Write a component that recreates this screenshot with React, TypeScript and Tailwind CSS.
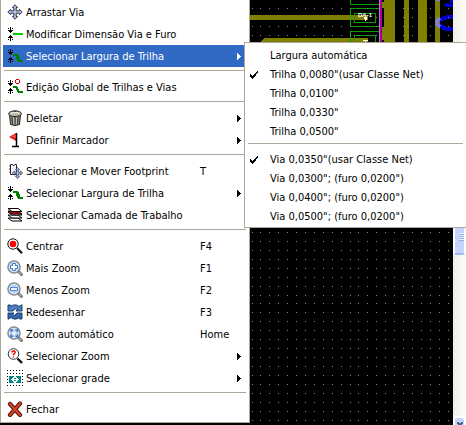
import React from "react";

type IconProps = { children: React.ReactNode; crisp?: boolean };

function Icon({ children, crisp = true }: IconProps) {
  return (
    <svg
      className="size-4 shrink-0"
      viewBox="0 0 16 16"
      shapeRendering={crisp ? "crispEdges" : "auto"}
      fill="none"
      aria-hidden="true"
    >
      {children}
    </svg>
  );
}

const Gap = () => (
  <path
    fill="#000"
    d="M3 1h1v6h-1zM1 2h1v1h-1zM5 2h1v1h-1zM1 4h5v1h-5zM2 5h3v1h-3zM3 9h1v6h-1zM2 10h3v1h-3zM1 11h5v1h-5zM1 13h1v1h-1zM5 13h1v1h-1z"
  />
);

const Track = () => (
  <path fill="#008000" d="M6 6h5v1h1v2h1v3h3v2h-5v-1h-1v-2h-1v-3h-3z" />
);

const MoveIcon = () => (
  <Icon crisp={false}>
    <path
      d="M8 .8 10.600 3.600H9.200V6.800h3.200V5.400L15.200 8l-2.800 2.600V9.200H9.200v3.200h1.400L8 15.200 5.400 12.400h1.400V9.200H3.600v1.400L.8 8l2.800-2.600v1.400h3.200V3.600H5.400z"
      fill="#b9c4e2"
      stroke="#33364a"
      strokeWidth="1"
    />
  </Icon>
);
const ViaSizeIcon = () => (
  <Icon>
    <Gap />
    <path fill="#00d000" d="M6 7h10v2H6z" />
  </Icon>
);
const TrackWidthIcon = () => (
  <Icon>
    <Gap />
    <Track />
  </Icon>
);
const GlobalEditIcon = () => (
  <Icon>
    <Gap />
    <path fill="#008000" d="M6 7h4v1h1v2h1v2h4v2h-5v-1h-1v-2h-1v-2h-3z" />
    <path fill="#f00000" d="M9 0h3v1h-3zM8 1h1v3h-1zM12 1h1v3h-1zM9 4h3v1h-3z" />
  </Icon>
);
const TrashIcon = () => (
  <Icon crisp={false}>
    <path d="M2.500 5h11l-1 9.500Q8 16.500 3.500 14.500z" fill="#8b8b80" stroke="#25251f" />
    <path d="M5 7l.5 7M8 7v7.500M11 7l-.5 7" stroke="#383830" />
    <path d="M6.500 7l.3 7M9.500 7v7" stroke="#d8d8cc" strokeWidth=".7" />
    <ellipse cx="8" cy="3.700" rx="6.500" ry="2.800" fill="#bdbdae" stroke="#25251f" />
    <path d="M4 3.200q4-2 8 0" stroke="#f4f4e8" />
    <path d="M6.500 1.200h3" stroke="#25251f" />
  </Icon>
);
const FlagIcon = () => (
  <Icon crisp={false}>
    <path d="M2 5 9 1v8z" fill="#f01818" />
    <path d="M4.500 5 9 2.500v3z" fill="#ff7060" />
    <path d="M9.500 1v13M5 14.500h7" stroke="#000" strokeWidth="1.500" />
  </Icon>
);
const MoveFootprintIcon = () => (
  <Icon crisp={false}>
    <path d="M3.500 1.500h2l.5 1h1l.5-1h2v10h-6z" fill="#f4f4fa" stroke="#222238" />
    <path d="M2 3h1M2 6h1M2 9h1" stroke="#d02020" />
    <path
      d="M10.500 4.500l2 2.200h-1.200v2.500h2.300V8L15.700 10l-2.100 2v-1.200h-2.300v2.500h1.200l-2 2.200-2-2.200h1.200v-2.500H7.400V12L5.300 10l2.100-2v1.200h2.300V6.700H8.500z"
      fill="#c0cbe8"
      stroke="#34395a"
      strokeWidth=".8"
    />
  </Icon>
);
const LayersIcon = () => (
  <Icon crisp={false}>
    {[11, 8, 5].map((y) => (
      <path key={y} d={`M1 ${y}h10l4 3H5z`} fill="#fff" stroke="#000" />
    ))}
    <path d="M1 4h10l4 3H5z" fill="#b00c0c" stroke="#300" />
    <path d="M1 1.500h10l4 3H5z" fill="#fff" stroke="#000" />
  </Icon>
);
const CenterIcon = () => (
  <Icon crisp={false}>
    <path d="M10 10l5 5.300" stroke="#111" strokeWidth="2" />
    <circle cx="6" cy="6" r="5.200" fill="#fff" stroke="#111" strokeWidth="1" />
    <circle cx="6" cy="6" r="3.300" fill="#f00" />
  </Icon>
);
const Lens = ({ children }: { children: React.ReactNode }) => (
  <Icon crisp={false}>
    <path d="M11.500 11.500l3 3" stroke="#777" strokeWidth="3" strokeLinecap="round" />
    <path d="M12 12l2.300 2.300" stroke="#c4c4c4" strokeWidth="1" />
    <circle cx="7" cy="7" r="6" fill="#b9d3f3" stroke="#85898c" strokeWidth="1.600" />
    <circle cx="7" cy="7" r="4.800" stroke="#e4effb" strokeWidth=".8" />
    {children}
  </Icon>
);
const ZoomInIcon = () => (
  <Lens>
    <path d="M7 3v8M3 7h8" stroke="#3d77c4" strokeWidth="3.400" />
    <path d="M7 4v6M4 7h6" stroke="#fff" strokeWidth="1.800" />
  </Lens>
);
const ZoomOutIcon = () => (
  <Lens>
    <path d="M3 7h8" stroke="#3d77c4" strokeWidth="3.600" />
    <path d="M4 7h6" stroke="#fff" strokeWidth="1.800" />
  </Lens>
);
const ZoomFitIcon = () => (
  <Lens>
    <path
      d="M4 6V4h2M8.500 4h2v2M10.500 8.500v2h-2M6 10.500H4v-2"
      stroke="#3d77c4"
      strokeWidth="1.500"
    />
    <circle cx="7.200" cy="7.200" r="1.300" fill="#fff" />
  </Lens>
);
const RefreshIcon = () => (
  <Icon crisp={false}>
    <path
      d="M1 1h2.500v1.500Q8-.8 12 2.500L15 .8V7H9l2-1.800Q8 3.500 6 7H1z"
      fill="#4d7fc0"
      stroke="#1c3f74"
    />
    <path
      d="M15 15h-2.500v-1.500Q8 16.800 4 13.500L1 15.200V9h6l-2 1.800Q8 12.500 10 9h5z"
      fill="#3465a4"
      stroke="#1c3f74"
    />
  </Icon>
);
const SelectZoomIcon = () => (
  <Icon crisp={false}>
    <path d="M10.500 10.500l4.500 4.500" stroke="#111" strokeWidth="2.400" />
    <circle cx="6.500" cy="6" r="5.300" fill="#fff" stroke="#333" strokeWidth="1" />
    <path d="M4.800 4.500q0-1.500 1.700-1.500t1.700 1.400q0 1-1.700 1.900v1M6.500 8.200v1.300" stroke="#e00" strokeWidth="1.400" />
  </Icon>
);
const gridSteps = [0, 3, 6, 9, 12, 15];
const GridIcon = () => (
  <Icon>
    {gridSteps.flatMap((y) =>
      gridSteps.map((x) => (
        <rect key={`${x}-${y}`} x={x} y={y} width="1" height="1" fill="#000" />
      )),
    )}
    <path fill="#008484" d="M2 6h12v7H2z" />
    <path fill="#fff" d="M4 9h8v1H4zM5 8h1v3H5zM10 8h1v3h-1zM6 7h1v5H6zM9 7h1v5H9zM7 6h2v2H7zM7 11h2v2H7z" />
    <path fill="#008484" d="M7 8h2v1H7zM7 10h2v1H7z" />
  </Icon>
);
const CloseIcon = () => (
  <Icon crisp={false}>
    <path d="M3 3l10 11M13 2.500L3 14" stroke="#4a150a" strokeWidth="4.200" strokeLinecap="round" />
    <path d="M3 3l10 11M13 2.500L3 14" stroke="#cf4426" strokeWidth="2.600" strokeLinecap="round" />
  </Icon>
);

type Item = {
  label: string;
  icon: React.ReactNode;
  shortcut?: string;
  submenu?: boolean;
  active?: boolean;
};

const groups: Item[][] = [
  [
    { label: "Arrastar Via", icon: <MoveIcon /> },
    { label: "Modificar Dimensão Via e Furo", icon: <ViaSizeIcon /> },
    { label: "Selecionar Largura de Trilha", icon: <TrackWidthIcon />, submenu: true, active: true },
  ],
  [{ label: "Edição Global de Trilhas e Vias", icon: <GlobalEditIcon /> }],
  [
    { label: "Deletar", icon: <TrashIcon />, submenu: true },
    { label: "Definir Marcador", icon: <FlagIcon />, submenu: true },
  ],
  [
    { label: "Selecionar e Mover Footprint", icon: <MoveFootprintIcon />, shortcut: "T" },
    { label: "Selecionar Largura de Trilha", icon: <TrackWidthIcon />, submenu: true },
    { label: "Selecionar Camada de Trabalho", icon: <LayersIcon /> },
  ],
  [
    { label: "Centrar", icon: <CenterIcon />, shortcut: "F4" },
    { label: "Mais Zoom", icon: <ZoomInIcon />, shortcut: "F1" },
    { label: "Menos Zoom", icon: <ZoomOutIcon />, shortcut: "F2" },
    { label: "Redesenhar", icon: <RefreshIcon />, shortcut: "F3" },
    { label: "Zoom automático", icon: <ZoomFitIcon />, shortcut: "Home" },
    { label: "Selecionar Zoom", icon: <SelectZoomIcon />, submenu: true },
    { label: "Selecionar grade", icon: <GridIcon />, submenu: true },
  ],
  [{ label: "Fechar", icon: <CloseIcon /> }],
];

const widthGroups: { label: string; checked?: boolean }[][] = [
  [
    { label: "Largura automática" },
    { label: 'Trilha 0,0080"(usar Classe Net)', checked: true },
    { label: 'Trilha 0,0100"' },
    { label: 'Trilha 0,0330"' },
    { label: 'Trilha 0,0500"' },
  ],
  [
    { label: 'Via 0,0350"(usar Classe Net)', checked: true },
    { label: 'Via 0,0300"; (furo 0,0200")' },
    { label: 'Via 0,0400"; (furo 0,0200")' },
    { label: 'Via 0,0500"; (furo 0,0200")' },
  ],
];

function MenuRow({ item }: { item: Item }) {
  return (
    <button
      type="button"
      role="menuitem"
      aria-haspopup={item.submenu ? "menu" : undefined}
      className={`flex h-[22px] w-full items-center gap-[3px] pr-1.5 pl-1 text-left whitespace-nowrap ${
        item.active ? "bg-[#316ac5] text-white" : "text-black"
      }`}
    >
      {item.icon}
      <span className="flex-1 pt-0.5">{item.label}</span>
      <span className="flex w-[41px] shrink-0 items-center justify-between">
        <span className="pt-0.5">{item.shortcut}</span>
        {item.submenu && (
          <svg className="h-[7px] w-1" viewBox="0 0 4 7" fill="currentColor" shapeRendering="crispEdges" aria-hidden="true">
            <path d="M0 0h1v1h1v1h1v1h1v1h-1v1h-1v1h-1v1h-1z" />
          </svg>
        )}
      </span>
    </button>
  );
}

const range = (n: number) => Array.from({ length: n }, (_, i) => i);

function Board() {
  return (
    <svg className="absolute inset-0 size-full" shapeRendering="crispEdges" aria-hidden="true">
      <g fill="#808000">
        <path d="M240 15h128v5H240zM264 38h104v4H261v-1h1v-1h1v-1h1z" />
        <path d="M384 0h11v42h-11v-2h-2v-2h-1v-8h1v-3h2V8h-2V2h2zM404 0h5v42h-5zM418 0h9v42h-9zM435 0h5v42h-5z" />
      </g>
      <g stroke="#00a000" fill="none">
        <path d="M350.500-1v5.500h29V-1M350.500 8.500h29v18h-29zM350.500 42V31.500h29V42M354.500 13.500h21v9h-21zM354.500 42v-6.500h21V42" />
      </g>
      <path d="M379 0h3v42h-3z" fill="#a000a0" />
      <path d="M379 0h1v42h-1z" fill="#c878c8" />
      <g fill="none" strokeWidth="4">
        <path d="M453 17h-5q-6 1-8 4M440 24q3 5 8 5h5" stroke="#0000d0" />
        <path d="M440 18q-6 4.500 0 9" stroke="#8080d0" />
      </g>
      <path d="M446 3h3v1h4v3h-7v-1h-2v-2h2zM450 0h3v3h-3z" fill="#0000d0" />
      <path d="M435 0h5v1h-5z" fill="#8080d0" />
      <g fill="#858585">
        {range(60).flatMap((row) =>
          range(24).map((col) => (
            <rect
              key={`${row}-${col}`}
              x={Math.floor(252 + col * 8.91)}
              y={Math.floor(8.3 + row * 8.96)}
              width="1"
              height="1"
            />
          )),
        )}
      </g>
      <text x="358" y="17" fill="#fff" className="font-['Liberation_Sans',sans-serif] text-[6px] font-bold">
        DA-1
      </text>
      <path d="M364 17h3v3h-1v1h-1v-2h-1zM363 40h5v1h-2v1h-1v-1h-2z" fill="#fff" />
    </svg>
  );
}

export default function App() {
  return (
    <main className="relative flex min-h-screen w-full overflow-hidden bg-black font-['DejaVu_Sans_Condensed','DejaVu_Sans',sans-serif] text-[11px] leading-[14px]">
      <section className="relative flex-1 overflow-hidden" aria-label="Placa">
        <Board />
      </section>

      <div className="flex w-[13px] flex-col bg-linear-to-r from-[#f0efe8] to-[#fefefb]">
        <div className="flex h-[255px] flex-col justify-end">
          <div className="h-8 rounded-b-sm border-2 border-white border-b-[#9db8f0] bg-[#c4d4fd] pt-2 pl-1">
            <div className="h-2 bg-[repeating-linear-gradient(#eef4fe_0_1px,#8cb0f8_1px_2px)]" />
          </div>
        </div>
        <div className="flex-1" />
        <div className="flex h-[9px] items-end overflow-hidden rounded-t-sm border-2 border-b-0 border-white bg-[#c4d4fd]">
          <svg className="h-1 w-3" viewBox="0 0 12 4" shapeRendering="crispEdges" aria-hidden="true">
            <path fill="#4d6185" d="M2 0h2v1h1v1h3v-1h1v-1h2v2h-1v1h-1v1h-5v-1h-1v-1h-1z" />
          </svg>
        </div>
      </div>

      <div
        role="menu"
        aria-label="Trilha e via"
        className="absolute top-0 left-0 w-[250px] border-x border-b border-[#aca899] bg-white px-0.5 pt-px pb-0.5"
      >
        {groups.map((group, i) => (
          <React.Fragment key={i}>
            {i > 0 && <hr className="mx-px mt-[3px] mb-[5px] border-t border-[#aca899]" />}
            {group.map((item) => (
              <MenuRow key={item.label} item={item} />
            ))}
          </React.Fragment>
        ))}
      </div>

      <div
        role="menu"
        aria-label="Selecionar Largura de Trilha"
        className="absolute top-[42px] left-[244px] w-[223px] border border-[#aca899] bg-white px-0.5 pt-[3px] pb-px"
      >
        {widthGroups.map((group, i) => (
          <React.Fragment key={i}>
            {i > 0 && <hr className="mx-px mt-0.5 mb-1.5 border-t border-[#aca899]" />}
            {group.map((item) => (
              <button
                key={item.label}
                type="button"
                role="menuitemradio"
                aria-checked={!!item.checked}
                className="flex h-[19px] w-full items-center gap-3 pl-[3px] text-left whitespace-nowrap text-black"
              >
                <svg className="h-2 w-2 shrink-0" viewBox="0 0 8 8" shapeRendering="crispEdges" aria-hidden="true">
                  {item.checked && (
                    <path d="M7 0h1v2h-1v1h-1v2h-1v1h-1v1h-1v1h-1v-1h-1v-1h-1v-3h1v1h1v1h1v-1h1v-1h1v-1h1v-1h1z" />
                  )}
                </svg>
                <span>{item.label}</span>
              </button>
            ))}
          </React.Fragment>
        ))}
      </div>
    </main>
  );
}
